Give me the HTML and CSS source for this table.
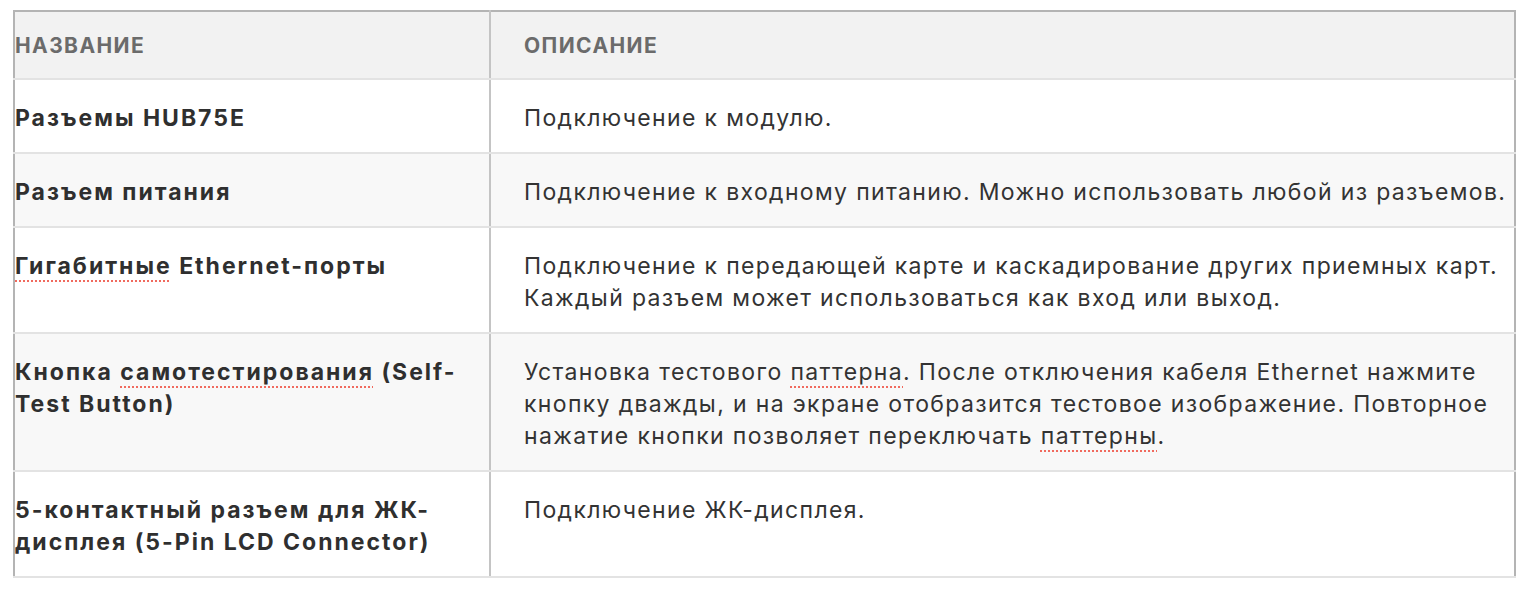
FILE: index.html
```html
<!DOCTYPE html>
<html lang="ru">
<head>
<meta charset="utf-8">
<link rel="stylesheet" href="styles.css">
</head>
<body>
<div class="page">
<table class="spec">
  <thead>
    <tr>
      <th class="name-col">Название</th>
      <th class="desc-col">Описание</th>
    </tr>
  </thead>
  <tbody>
    <tr>
      <td class="name-col">Разъемы HUB75E</td>
      <td class="desc-col">Подключение к модулю.</td>
    </tr>
    <tr class="alt">
      <td class="name-col">Разъем питания</td>
      <td class="desc-col">Подключение к входному питанию. Можно использовать любой из разъемов.</td>
    </tr>
    <tr>
      <td class="name-col"><span class="spell">Гигабитные</span> Ethernet-порты</td>
      <td class="desc-col">Подключение к передающей карте и каскадирование других приемных карт.<br>Каждый разъем может использоваться как вход или выход.</td>
    </tr>
    <tr class="alt">
      <td class="name-col">Кнопка <span class="spell">самотестирования</span> (Self-<br>Test Button)</td>
      <td class="desc-col">Установка тестового <span class="spell">паттерна</span>. После отключения кабеля Ethernet нажмите<br>кнопку дважды, и на экране отобразится тестовое изображение. Повторное<br>нажатие кнопки позволяет переключать <span class="spell">паттерны</span>.</td>
    </tr>
    <tr>
      <td class="name-col">5-контактный разъем для ЖК-<br>дисплея (5-Pin LCD Connector)</td>
      <td class="desc-col">Подключение ЖК-дисплея.</td>
    </tr>
  </tbody>
</table>
</div>
</body>
</html>
```

FILE: styles.css
```css
html, body {
  margin: 0;
  padding: 0;
  background: #ffffff;
}

.page {
  padding: 10px 14px 0 13px;
  font-family: Inter, "Noto Sans", "Liberation Sans", sans-serif;
  color: #333333;
}

.spec {
  width: 1503px;
  border-collapse: collapse;
  border: 2px solid #b4b4b4;
  font-size: 23px;
  line-height: 32px;
  letter-spacing: 1.35px;
}

.spec th,
.spec td {
  text-align: left;
  vertical-align: top;
  border-bottom: 2px solid #e3e3e3;
  white-space: nowrap;
}

.spec th {
  background: #f2f2f2;
  color: #6b6b6b;
  font-size: 21px;
  font-weight: 700;
  text-transform: uppercase;
  letter-spacing: 1.4px;
  line-height: 30px;
  padding: 19px 0 17px 0;
}

.spec td {
  padding: 22px 0 18px 0;
}

.spec .name-col {
  width: 474px;
  padding-left: 0;
  border-right: 2px solid #c4c4c4;
}

.spec td.name-col {
  font-weight: 700;
  color: #2f2f2f;
  letter-spacing: 2px;
}

.spec .desc-col {
  padding-left: 33px;
  padding-right: 4px;
}

.spec tr.alt td {
  background: #f8f8f8;
}

.spell {
  text-decoration: underline dotted #f06a5e;
  text-decoration-thickness: 2px;
  text-underline-offset: 6px;
}
```
